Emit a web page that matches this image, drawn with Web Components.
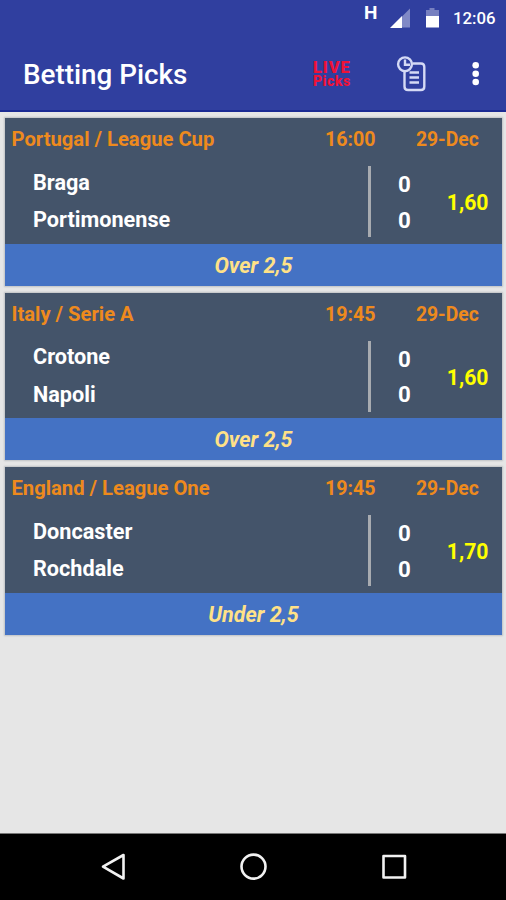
<!DOCTYPE html>
<html lang="en"><head><meta charset="utf-8"><title>Betting Picks</title>
<style>
html,body{margin:0;height:100%}
body{background:#e6e6e6;font-family:Roboto,"Liberation Sans",sans-serif;overflow:hidden}
</style></head><body>
<picks-app></picks-app>
<script>
const define=(name,html,init)=>customElements.define(name,class extends HTMLElement{
  constructor(){super();const t=document.createElement('template');t.innerHTML=html;
    this.attachShadow({mode:'open'}).append(t.content.cloneNode(true));}
  connectedCallback(){if(init)init(this);}
});

define('status-bar',`<style>
:host{display:flex;height:36px;box-sizing:border-box;padding:0 10.500px 0 364px;background:#303f9f;color:#fff}
.h{font-weight:700;font-size:19px;line-height:26px;width:26px}
svg{display:block}
.time{margin-left:auto;font-size:16.800px;font-weight:500;line-height:37px}
</style>
<span class="h">H</span>
<svg width="54" height="36" viewBox="0 0 54 36"><path d="M20 8.500V27.500H1Z" fill="#8089c6"/><path d="M12 16V28H0Z" fill="#fff"/><path d="M36 10H39.500V8H44.500V10H49V16H36Z" fill="#7780c0"/><path d="M36 16H49V27.500H36Z" fill="#fff"/></svg>
<span class="time">12:06</span>`);

define('app-bar',`<style>
:host{display:flex;height:76px;box-sizing:border-box;padding:0 0 0 23px;background:#303f9f;color:#fff;border-bottom:2px solid #1c2b93}
h1{margin:0;font-size:27.800px;font-weight:500;line-height:78px;width:290px;white-space:nowrap}
.live{color:#ee1238;font-weight:900;width:83px;padding-top:26px;box-sizing:border-box}
.live b{display:block;line-height:12px;height:13px;white-space:nowrap}
.a{font-size:16.500px;letter-spacing:.9px}.p{font-size:14px;letter-spacing:.5px}
svg{display:block}
</style><h1>Betting Picks</h1>
<div class="live"><b class="a">LIVE</b><b class="p">Picks</b></div>
<svg width="74" height="74" viewBox="0 0 74 74" fill="none" stroke="#d5daf5" stroke-width="2.400"><circle cx="9" cy="28.300" r="6.900"/><path d="M9 23.500V28.800H14M16.500 27.500H25Q28.300 27.500 28.300 31V50.500Q28.300 54 25 54H12Q8.500 54 8.500 50.500V36M13.500 36.500H23M13.500 41.500H23M13.500 46.500H23"/></svg>
<svg width="12" height="74" viewBox="0 0 12 74" fill="#fff"><circle cx="5.700" cy="29.300" r="3.300"/><circle cx="5.700" cy="37.700" r="3.300"/><circle cx="5.700" cy="46" r="3.300"/></svg>`);

define('pick-card',`<style>
:host{display:block;height:167.500px;background:#44546a;font-weight:700;box-shadow:0 0 1.500px 1px #bfc2c4;white-space:nowrap}
.head{display:grid;grid-template-columns:313.500px 91px 1fr;padding:0 0 0 6.500px;height:48px;box-sizing:border-box;font-size:20.200px;line-height:43px;color:#ee8a1d}
slot[name=time]{font-size:19.600px}
slot[name=date]{font-size:19.300px}
.body{display:grid;grid-template-columns:334.500px 3px 24px 20px 1fr;padding-left:28px;height:77.500px;color:#fff}
.teams{font-size:21.650px;line-height:37.500px;margin-top:-2.500px}
.rule{height:71px;background:#a8abb0;width:3px}
.score{font-size:22.300px;line-height:35.500px;grid-column:4;text-align:center;margin-top:1px}
.odds{font-size:21.200px;line-height:74px;color:#ff0;text-align:right;padding-right:13.500px}
.tip{height:42px;line-height:44.500px;background:#4472c4;color:#ffe187;text-align:center;font-style:italic;font-size:21.500px}
.score ::slotted(*),.teams ::slotted(*){display:block}
</style>
<div class="head"><slot name="league"></slot><div><slot name="time"></slot></div><div><slot name="date"></slot></div></div>
<div class="body"><div class="teams"><slot name="team"></slot></div><div class="rule"></div><div class="score"><slot name="score"></slot></div><div class="odds"><slot name="odds"></slot></div></div>
<div class="tip"><slot name="tip"></slot></div>`);

define('nav-bar',`<style>:host{display:flex;height:67px;background:#000;border-top:1px solid #777;box-sizing:border-box}svg{display:block}</style>
<svg width="506" height="66" viewBox="0 0 506 66" fill="none" stroke="#f2f2f2" stroke-width="2.600" stroke-linejoin="round"><path d="M123.500 21V44.500L103 32.700Z"/><circle cx="253.500" cy="32.600" r="12"/><rect x="383.500" y="22" width="21.500" height="21.500"/></svg>`);

define('picks-app',`<style>
:host{display:flex;flex-direction:column;height:900px;width:506px;background:#e6e6e6}
main{flex:1;display:flex;flex-direction:column;gap:7px;padding:6px 4px 0 5px}
</style><status-bar></status-bar><app-bar></app-bar><main></main><nav-bar></nav-bar>`,el=>{
 const picks=[['Portugal / League Cup','16:00','Braga','Portimonense','1,60','Over 2,5'],['Italy / Serie A','19:45','Crotone','Napoli','1,60','Over 2,5'],['England / League One','19:45','Doncaster','Rochdale','1,70','Under 2,5']];
 const m=el.shadowRoot.querySelector('main');
 m.innerHTML=picks.map(([l,t,a,b,o,p])=>`<pick-card><span slot="league">${l}</span><span slot="time">${t}</span><span slot="date">29-Dec</span><span slot="team">${a}</span><span slot="team">${b}</span><span slot="score">0</span><span slot="score">0</span><span slot="odds">${o}</span><span slot="tip">${p}</span></pick-card>`).join('');
});
</script></body></html>
